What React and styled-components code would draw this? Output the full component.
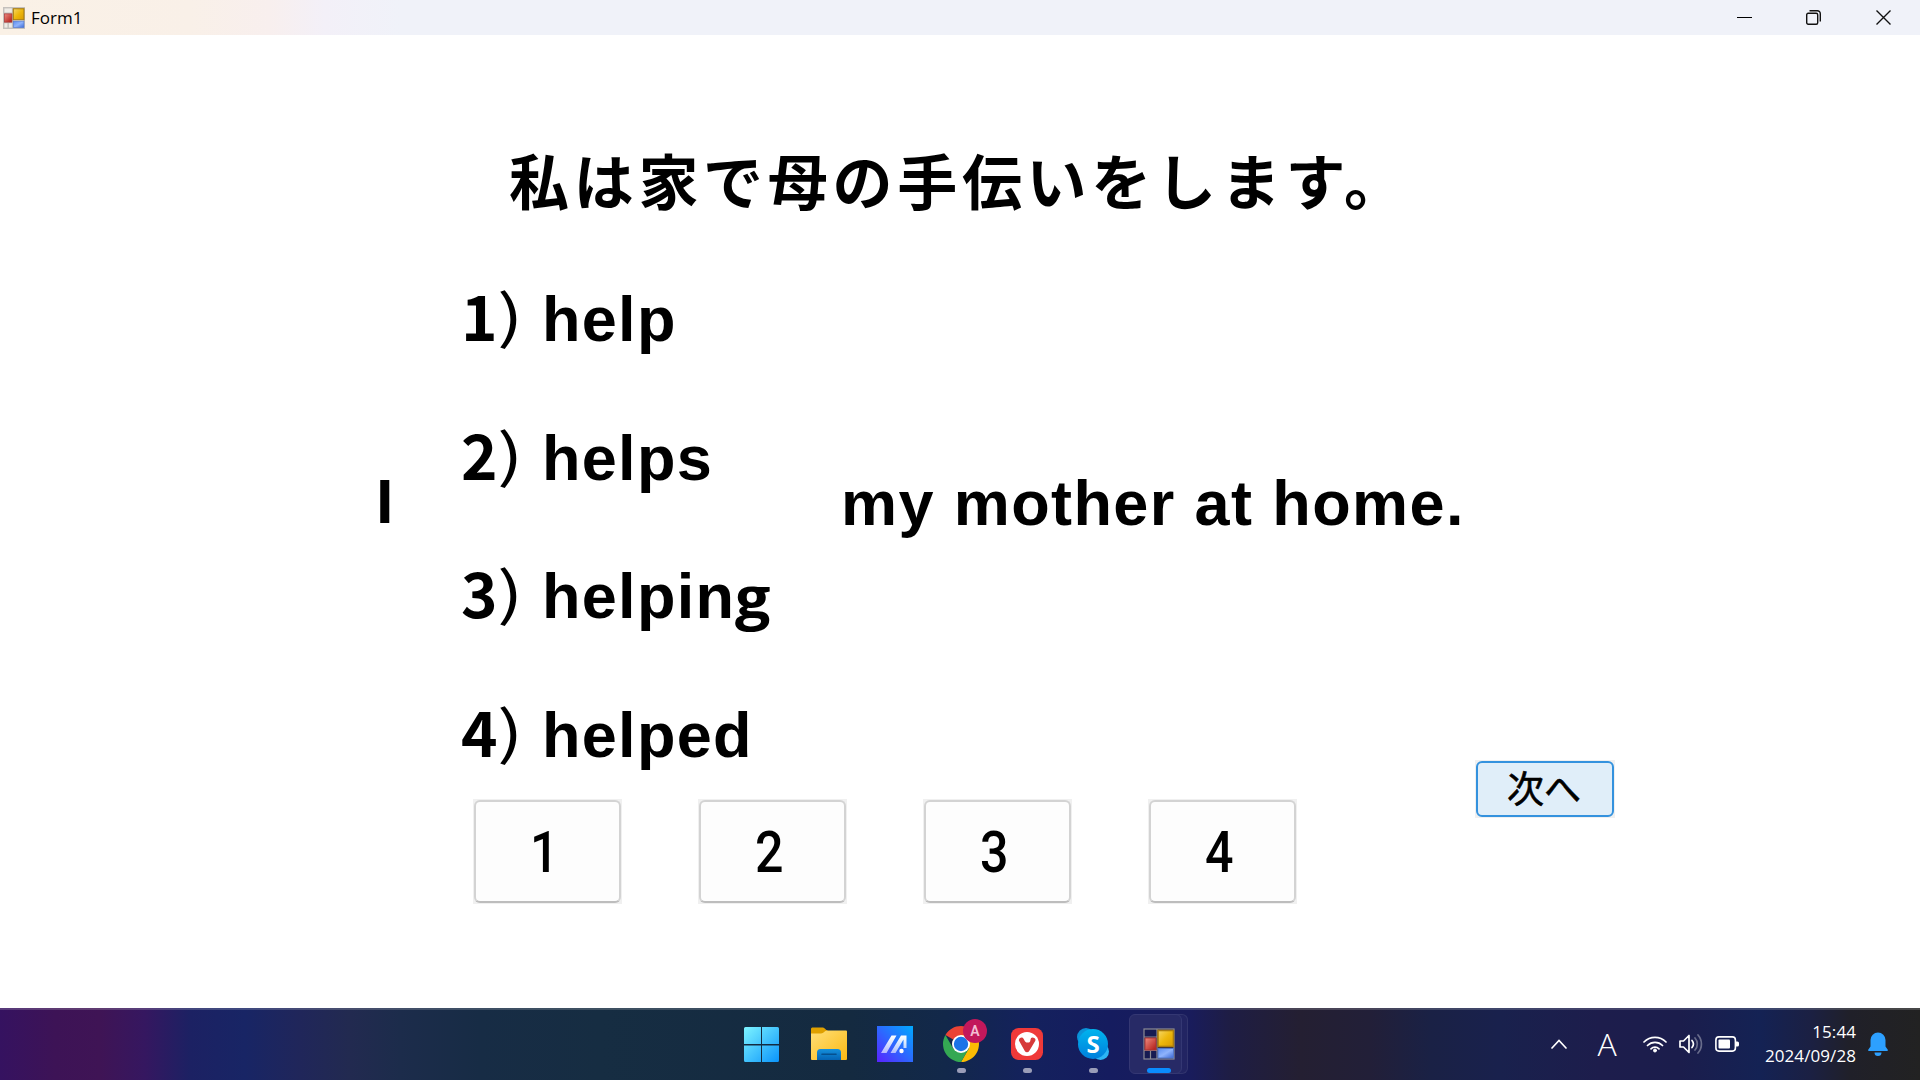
import React from "react";
import styled, { createGlobalStyle } from "styled-components";

const JP = '"Noto Sans CJK JP", sans-serif';
const UI = '"Open Sans", "Noto Sans", sans-serif';

const GlobalStyle = createGlobalStyle`
  * { box-sizing: border-box; }
  html, body { margin: 0; padding: 0; overflow: hidden; background: #fff; }
`;

const Desktop = styled.div`
  width: 1920px;
  height: 1080px;
  display: flex;
  flex-direction: column;
  overflow: hidden;
  color: #000;
`;

const TitleBar = styled.header`
  height: 35px;
  flex: none;
  display: flex;
  align-items: center;
  padding-left: 3px;
  background: linear-gradient(90deg, #faf1e6 0, #f9f0e8 190px, #f8efee 270px, #f3f0f8 325px, #f0f2f9 400px);
`;

const Caption = styled.span`
  flex: 1;
  margin-left: 6px;
  font: 17px/35px ${UI};
  letter-spacing: 0;
`;

const WindowButton = styled.div`
  width: ${(p) => p.$w}px;
  height: 33px;
  display: flex;
  align-items: center;
  justify-content: center;
`;

const Client = styled.main`
  height: 973px;
  flex: none;
  display: flex;
  background: #fff;
`;

const Quiz = styled.section`
  width: 1475px;
  display: flex;
  flex-direction: column;
`;

const Side = styled.aside`
  padding-top: 725px;
`;

const Prompt = styled.h1`
  margin: 0;
  height: 238px;
  padding: 101px 0 0 509px;
  font: 700 60px/86px ${JP};
  letter-spacing: 4.7px;
  white-space: nowrap;
`;

const Sentence = styled.div`
  height: 526px;
  display: flex;
  white-space: nowrap;
  font: 700 63px/72px "Liberation Sans", Arial, sans-serif;
  letter-spacing: 1.3px;
`;

const Subject = styled.div`
  width: 461px;
  padding: 192px 0 0 376px;
`;

const Options = styled.div`
  width: 380px;
  padding-top: 5px;
`;

const Option = styled.div`
  height: 138.7px;
  display: flex;
  align-items: baseline;
`;

const Num = styled.span`
  width: 36px;
  font: 700 62px/72px ${JP};
  letter-spacing: 0;
`;

const Paren = styled.span`
  width: 45px;
  font: 400 58px/72px ${JP};
  letter-spacing: 0;
  transform: translateY(-3px) scaleX(1.35);
  transform-origin: 0 50%;
`;

const Ear = styled.span`
  font-family: "Open Sans", sans-serif;
  font-size: 58px;
  line-height: 0;
  display: inline-block;
  transform: scaleX(1.08);
  transform-origin: 0 50%;
`;

const Rest = styled.div`
  padding-top: 194px;
  letter-spacing: 1.4px;
`;

const Answers = styled.div`
  display: flex;
  gap: 76px;
  padding-left: 473px;
`;

const ButtonFrame = styled.div`
  background: #f0f0f0;
  padding: 1px;
  width: ${(p) => (p.$primary ? 140 : 149)}px;
  height: ${(p) => (p.$primary ? 58 : 105)}px;
`;

const Button = styled.button`
  display: flex;
  align-items: center;
  justify-content: center;
  width: 100%;
  height: 100%;
  margin: 0;
  padding: ${(p) => (p.$primary ? "0 2px 4px 0" : "2px 6px 0 0")};
  border-radius: 6px;
  border: 2px solid ${(p) => (p.$primary ? "#3492de" : "#d3d3d3")};
  ${(p) => !p.$primary && "border-bottom-color: #bdbdbd;"}
  background: ${(p) => (p.$primary ? "#e0eef9" : "#fdfdfd")};
  color: #000;
  font: ${(p) => (p.$primary ? `400 37px/54px ${JP}` : `500 57px/90px Roboto, sans-serif`)};
  -webkit-text-stroke: ${(p) => (p.$primary ? "0.6px #000" : "0")};
`;

const Digit = styled.span`
  transform: scaleX(0.88);
`;

const Taskbar = styled.footer`
  height: 72px;
  flex: none;
  display: flex;
  align-items: stretch;
  border-top: 2px solid rgba(255, 255, 255, 0.17);
  background: linear-gradient(90deg,
    #351260 0, #3d1356 55px, #3f1455 100px, #351760 145px, #1c2163 190px, #182565 245px,
    #20265a 300px, #222a50 350px, #1c2c4b 400px, #172c45 480px, #162d42 600px, #142a40 850px,
    #12284a 945px, #14215d 1030px, #151c5f 1110px, #191c5c 1190px, #1e1d44 1230px, #241f32 1300px,
    #221f38 1370px, #1a2145 1430px, #19214d 1500px, #1d1d4c 1600px, #1b1d4c 1680px, #142254 1760px,
    #1b2043 1810px, #202029 1850px, #222222 1920px);
  background-origin: border-box;
`;

const Apps = styled.div`
  margin-left: 729px;
  display: flex;
`;

const Slot = styled.div`
  width: ${(p) => (p.$first ? 67 : 66)}px;
  height: 70px;
  padding: 4px ${(p) => (p.$first ? 2 : 0)}px 0 0;
  display: flex;
  flex-direction: column;
  align-items: center;
`;

const Tile = styled.div`
  position: relative;
  width: 60px;
  height: 60px;
  display: flex;
  align-items: center;
  justify-content: center;
`;

const StackEdge = styled.div`
  position: absolute;
  left: 20px;
  top: 0;
  width: 39px;
  height: 60px;
  border-radius: 6px;
  background: rgba(255, 255, 255, 0.04);
  border: 1px solid rgba(255, 255, 255, 0.07);
`;

const StackFace = styled.div`
  position: absolute;
  left: 0;
  top: 0;
  width: 53px;
  height: 60px;
  border-radius: 6px;
  background: #272a66;
  border: 1px solid #343773;
`;

const TileIcon = styled.div`
  position: relative;
  display: flex;
`;

const Badge = styled.span`
  position: absolute;
  left: 32px;
  top: 5px;
  width: 24px;
  height: 24px;
  border-radius: 50%;
  background: #c2185b;
  color: #f3bdd3;
  text-align: center;
  font: 600 14px/24px Roboto, sans-serif;
`;

const Indicator = styled.div`
  width: ${(p) => (p.$active ? 24 : 9)}px;
  height: 5px;
  margin-top: -6px;
  position: relative;
  border-radius: 3px;
  background: ${(p) => (p.$active ? "#0a8cff" : "#9a9db8")};
`;

const SkypeLetter = styled.span`
  position: absolute;
  left: 0;
  right: 0;
  top: 0;
  text-align: center;
  color: #fff;
  font: 700 24px/32px "Open Sans", sans-serif;
`;

const Tray = styled.div`
  flex: 1;
  display: flex;
  align-items: center;
  justify-content: flex-end;
  padding: 0 32px 2px 0;
  color: #fff;
`;

const Glyph = styled.div`
  display: flex;
  margin-right: ${(p) => p.$mr}px;
`;

const Ime = styled.span`
  width: 18px;
  margin-right: 27px;
  display: flex;
  justify-content: center;
  font: 300 32px/60px "Open Sans", sans-serif;
`;

const Clock = styled.div`
  width: 105px;
  margin-right: 12px;
  text-align: right;
  font: 17px/24px ${UI};
  letter-spacing: 0.08px;
`;

const FormIcon = ({ size, dark }) => (
  <svg width={size} height={size} viewBox="0 0 32 32">
    <defs>
      <linearGradient id="fy" x1="0" y1="0" x2="1" y2="1"><stop offset="0" stopColor="#f6d768" /><stop offset=".5" stopColor="#edb70c" /><stop offset="1" stopColor="#d99a00" /></linearGradient>
      <linearGradient id="fr" x1="0" y1="0" x2="1" y2="1"><stop offset="0" stopColor="#ee8b80" /><stop offset="1" stopColor="#b01914" /></linearGradient>
      <linearGradient id="fb" x1="0" y1="0" x2="1" y2="1"><stop offset="0" stopColor="#5a8cf0" /><stop offset=".5" stopColor="#8fb3fb" /><stop offset="1" stopColor="#3a68d8" /></linearGradient>
    </defs>
    <rect x="1" y="1" width="30" height="30" fill={dark ? "#171b52" : "#efebe5"} stroke={dark ? "#8c8c94" : "#c4c0bc"} strokeWidth={dark ? 1.2 : 2.2} />
    <path d="M1 9h13M14 1v30M1 22.500h13M7.500 22v9" stroke={dark ? "#8c8c94" : "#c4c0bc"} strokeWidth={dark ? 1.2 : 2.2} />
    <rect x="2" y="10" width="11" height="12" fill="url(#fr)" stroke="#a33" />
    <rect x="15" y="2.500" width="15.500" height="16" fill="url(#fy)" stroke="#a97c10" strokeWidth="1.600" />
    <rect x="15" y="20.500" width="15.500" height="9.500" fill="url(#fb)" stroke="#5478c8" />
  </svg>
);

const StartIcon = () => (
  <svg width="35" height="35" viewBox="0 0 35 35">
    <defs><linearGradient id="win" gradientUnits="userSpaceOnUse" x1="0" y1="0" x2="35" y2="35"><stop offset="0" stopColor="#7df4ff" /><stop offset="1" stopColor="#0a94fb" /></linearGradient></defs>
    <path fill="url(#win)" d="M1.500 0H17v17H0V1.500A1.500 1.500 0 0 1 1.500 0zM18 0h15.500A1.500 1.500 0 0 1 35 1.500V17H18zM0 18.500h17V35H1.500A1.500 1.500 0 0 1 0 33.500zM18 18.500h17v15a1.500 1.500 0 0 1-1.500 1.500H18z" />
  </svg>
);

const FolderIcon = () => (
  <svg width="36" height="34" viewBox="0 0 36 34">
    <defs>
      <linearGradient id="fold" x1="0" y1="0" x2="1" y2="1"><stop offset="0" stopColor="#ffdf78" /><stop offset="1" stopColor="#fcb913" /></linearGradient>
      <linearGradient id="foldb" x1="0" y1="0" x2="0" y2="1"><stop offset="0" stopColor="#1590dc" /><stop offset="1" stopColor="#0463b4" /></linearGradient>
    </defs>
    <path fill="#dfa000" d="M1 .5h11c1.500 0 3 3 4.500 3v6H0V1.500z" />
    <path fill="url(#fold)" d="M0 6.500h10c3 0 3.500-3 6-3h19a1 1 0 0 1 1 1V32a1 1 0 0 1-1 1H1a1 1 0 0 1-1-1z" />
    <path fill="url(#foldb)" d="M6 33v-7.500A3.500 3.500 0 0 1 9.500 22h17a3.500 3.500 0 0 1 3.500 3.500V33z" />
    <path d="M11 27.300h14" stroke="#05508f" strokeWidth="1.600" strokeLinecap="round" />
  </svg>
);

const MyAsusIcon = () => (
  <svg width="36" height="36" viewBox="0 0 36 36">
    <defs>
      <linearGradient id="asus" x1="0" y1="1" x2="1" y2="0"><stop offset="0" stopColor="#5a22ff" /><stop offset=".5" stopColor="#2c69ff" /><stop offset="1" stopColor="#00aaff" /></linearGradient>
      <linearGradient id="asusw" x1="0" y1="1" x2="0" y2="0"><stop offset="0" stopColor="#fff" stopOpacity=".6" /><stop offset="1" stopColor="#fff" /></linearGradient>
    </defs>
    <path fill="url(#asus)" d="M0 0h36v36H0z" />
    <path fill="url(#asusw)" d="M4 27 14.500 9.500h5L9.500 27zM13.500 27 24 9.500h5.500V22h-3v-8.500L18.500 27z" />
    <circle cx="24.500" cy="25" r="2.200" fill="#fff" />
  </svg>
);

const ChromeIcon = () => (
  <svg width="36" height="36" viewBox="0 0 48 48">
    <path fill="#ea4335" d="M24 24 3.220 12A24 24 0 0 1 44.780 12H24z" />
    <path fill="#fbbc04" d="M44.780 12A24 24 0 0 1 24 48L34.400 30 24 12z" />
    <path fill="#34a853" d="M3.220 12A24 24 0 0 0 24 48L34.400 30H13.600z" />
    <circle cx="24" cy="24" r="12" fill="#fff" />
    <circle cx="24" cy="24" r="9.600" fill="#1a73e8" />
  </svg>
);

const VivaldiIcon = () => (
  <svg width="32" height="32" viewBox="0 0 32 32">
    <rect width="32" height="32" rx="7.500" fill="#ef3939" />
    <circle cx="16" cy="16" r="12" fill="#fff" />
    <path fill="#d63a3a" d="M7.900 12.600a2.600 2.600 0 0 1 4.800-1.700c1.100 2.200 2.100 3.900 4.300 3.700 1.700-.2 2.500-1.200 2.400-2.700a2.500 2.500 0 1 1 4.800 1.200L18.200 23a2.500 2.500 0 0 1-4.400 0z" />
  </svg>
);

const SkypeIcon = () => (
  <svg width="32" height="32" viewBox="0 0 32 32">
    <defs><linearGradient id="sky" x1="0" y1="0" x2="0" y2="1"><stop offset="0" stopColor="#00b4ee" /><stop offset="1" stopColor="#007fdc" /></linearGradient></defs>
    <circle cx="9" cy="9" r="9" fill="#0a92d8" />
    <circle cx="23.500" cy="23.500" r="8.500" fill="#2cb5f4" />
    <circle cx="16" cy="16" r="15" fill="url(#sky)" />
  </svg>
);

const options = [
  ["1", "help", ""],
  ["2", "helps", ""],
  ["3", "helpin", "g"],
  ["4", "helped", ""],
];

const AppSlot = ({ children, first, running, active }) => (
  <Slot $first={first}>
    <Tile>{children}</Tile>
    {(running || active) && <Indicator $active={active} />}
  </Slot>
);

export default function App() {
  return (
    <Desktop>
      <GlobalStyle />
      <TitleBar>
        <FormIcon size={22} />
        <Caption>Form1</Caption>
        <WindowButton $w={70}>
          <svg width="15" height="15"><path d="M0 7.500h15" stroke="#000" /></svg>
        </WindowButton>
        <WindowButton $w={68}>
          <svg width="15" height="15" fill="none" stroke="#111" strokeWidth="1.400">
            <rect x=".7" y="3.300" width="11" height="11" rx="1.500" />
            <path d="M3.500.7h7.800a3 3 0 0 1 3 3v7.800" />
          </svg>
        </WindowButton>
        <WindowButton $w={73}>
          <svg width="15" height="15"><path d="M.5.500l14 14M14.500.5l-14 14" stroke="#111" strokeWidth="1.400" /></svg>
        </WindowButton>
      </TitleBar>
      <Client>
        <Quiz>
          <Prompt>私は家で母の手伝いをします。</Prompt>
          <Sentence>
            <Subject>I</Subject>
            <Options>
              {options.map(([n, word, tail]) => (
                <Option key={n}>
                  <Num>{n}</Num>
                  <Paren>)</Paren>
                  <span>{word}{tail && <Ear>{tail}</Ear>}</span>
                </Option>
              ))}
            </Options>
            <Rest>my mother at home.</Rest>
          </Sentence>
          <Answers>
            {options.map(([n]) => (
              <ButtonFrame key={n}>
                <Button><Digit>{n}</Digit></Button>
              </ButtonFrame>
            ))}
          </Answers>
        </Quiz>
        <Side>
          <ButtonFrame $primary>
            <Button $primary>次へ</Button>
          </ButtonFrame>
        </Side>
      </Client>
      <Taskbar>
        <Apps>
          <AppSlot first><StartIcon /></AppSlot>
          <AppSlot><FolderIcon /></AppSlot>
          <AppSlot><MyAsusIcon /></AppSlot>
          <AppSlot running><ChromeIcon /><Badge>A</Badge></AppSlot>
          <AppSlot running><VivaldiIcon /></AppSlot>
          <AppSlot running>
            <TileIcon><SkypeIcon /><SkypeLetter>S</SkypeLetter></TileIcon>
          </AppSlot>
          <AppSlot active>
            <StackEdge />
            <StackFace />
            <TileIcon><FormIcon size={32} dark /></TileIcon>
          </AppSlot>
        </Apps>
        <Tray>
          <Glyph $mr={31}>
            <svg width="16" height="10" fill="none" stroke="#fff" strokeWidth="1.700" strokeLinecap="round"><path d="M1 9l7-7.500L15 9" /></svg>
          </Glyph>
          <Ime>A</Ime>
          <Glyph $mr={12}>
            <svg width="24" height="18" fill="none" stroke="#fff" strokeWidth="1.700" strokeLinecap="round">
              <path d="M1 7a15.500 15.500 0 0 1 22 0M4.500 10.500a10.600 10.600 0 0 1 15 0M8 13.800a5.700 5.700 0 0 1 8 0" />
              <circle cx="12" cy="15.500" r="1.500" fill="#fff" strokeWidth="1" />
            </svg>
          </Glyph>
          <Glyph $mr={12}>
            <svg width="24" height="20" fill="none" stroke="#fff" strokeWidth="1.700" strokeLinecap="round" strokeLinejoin="round">
              <path d="M1 7h3.500L10 1.500v17L4.500 13H1zM13 6.500a5.500 5.500 0 0 1 0 7" />
              <path d="M16 4a9 9 0 0 1 0 12M19 1a13.500 13.500 0 0 1 0 18" opacity=".35" />
            </svg>
          </Glyph>
          <Glyph $mr={12}>
            <svg width="24" height="16">
              <rect x=".9" y=".9" width="19.500" height="14.200" rx="3" fill="none" stroke="#fff" strokeWidth="1.600" />
              <rect x="3.500" y="3.500" width="11.500" height="9" rx="1" fill="#fff" />
              <path d="M21 5.500h1.500a1.500 1.500 0 0 1 1.500 1.500v2a1.500 1.500 0 0 1-1.500 1.500H21z" fill="#fff" />
            </svg>
          </Glyph>
          <Clock>15:44<br />2024/09/28</Clock>
          <svg width="20" height="24" fill="#2da0ff">
            <path d="M10 .5a7.500 7.500 0 0 1 7.500 7.500v6.500l2.300 3.300c.3.600 0 1.200-.8 1.200H1c-.8 0-1.100-.6-.8-1.200l2.300-3.300V8A7.500 7.500 0 0 1 10 .5zM6.500 20.500h7a3.500 3.500 0 0 1-7 0z" />
          </svg>
        </Tray>
      </Taskbar>
    </Desktop>
  );
}
